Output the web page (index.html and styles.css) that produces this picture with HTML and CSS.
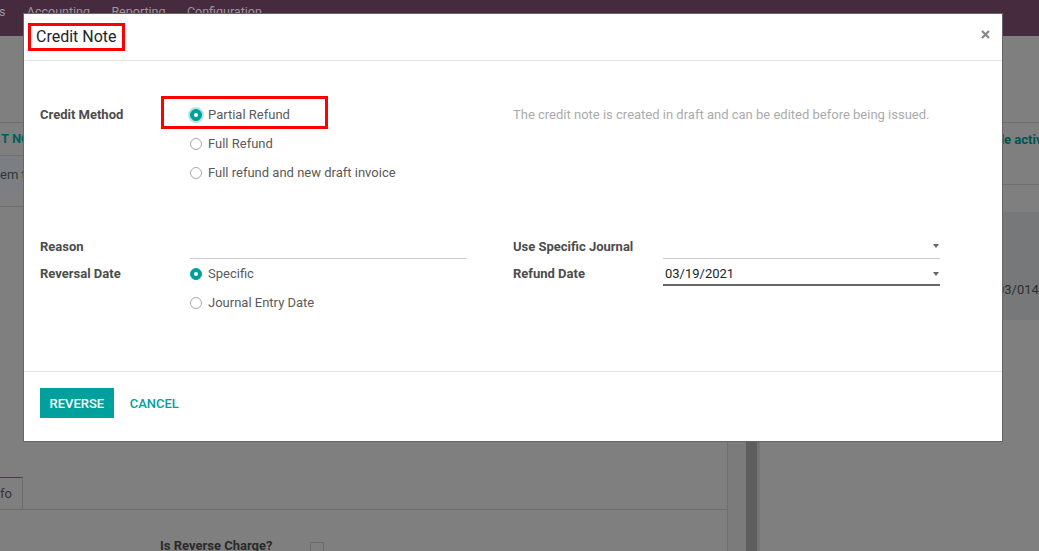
FILE: index.html
```html
<!DOCTYPE html>
<html lang="en">
<head>
<meta charset="utf-8">
<title>Credit Note</title>
<link rel="stylesheet" href="styles.css">
</head>
<body>
<div class="app">
  <header class="navbar">
    <span class="nav-item first">s</span>
    <span class="nav-item">Accounting</span>
    <span class="nav-item">Reporting</span>
    <span class="nav-item">Configuration</span>
  </header>
  <div class="control-panel"></div>
  <div class="workspace">
    <section class="sheet-area">
      <div class="statusbar"><span class="status-btn">T NOTE</span></div>
      <div class="alert-row"><span>em to</span></div>
      <div class="sheet-sep"></div>
      <div class="sheet-spacer"></div>
      <div class="tabs"><span class="tab">fo</span></div>
      <div class="field-row"><span class="field-label">Is Reverse Charge?</span><span class="checkbox"></span></div>
    </section>
    <div class="scroll-gap"></div>
    <div class="scroll-bar"></div>
    <aside class="chatter">
      <div class="chatter-top"><span class="chatter-btn">Schedule activity</span></div>
      <div class="message"><span class="message-date">03/014</span></div>
    </aside>
  </div>
</div>

<div class="modal">
  <div class="modal-header">
    <h4 class="modal-title"><span class="title-box">Credit Note</span></h4>
    <button class="close" aria-label="Close">
      <svg width="9" height="9" viewBox="0 0 9 9"><path d="M1 1 L8 8 M8 1 L1 8" stroke="#878787" stroke-width="2.2" stroke-linecap="butt"/></svg>
    </button>
  </div>
  <div class="modal-body">
    <div class="group group-top">
      <div class="label">Credit Method</div>
      <div class="radios">
        <div class="radio-item annotated">
          <span class="radio checked focus"></span><span class="radio-text">Partial Refund</span>
          <span class="annot-box"></span>
        </div>
        <div class="radio-item"><span class="radio"></span><span class="radio-text">Full Refund</span></div>
        <div class="radio-item"><span class="radio"></span><span class="radio-text">Full refund and new draft invoice</span></div>
      </div>
      <div class="help">The credit note is created in draft and can be edited before being issued.</div>
    </div>

    <div class="group group-bottom">
      <div class="left-half">
        <div class="label short">Reason</div>
        <div class="input-line"></div>
        <div class="label">Reversal Date</div>
        <div class="radios">
          <div class="radio-item"><span class="radio checked"></span><span class="radio-text">Specific</span></div>
          <div class="radio-item"><span class="radio"></span><span class="radio-text">Journal Entry Date</span></div>
        </div>
      </div>
      <div class="right-half">
        <div class="label short">Use Specific Journal</div>
        <div class="select-line"><span></span><span class="caret"></span></div>
        <div class="label">Refund Date</div>
        <div class="date-input"><span class="date-value">03/19/2021</span><span class="caret"></span></div>
      </div>
    </div>
  </div>
  <div class="modal-footer">
    <button class="btn-primary">REVERSE</button>
    <button class="btn-link">CANCEL</button>
  </div>
</div>
</body>
</html>
```

FILE: styles.css
```css
* { box-sizing: border-box; }

html, body {
  margin: 0;
  padding: 0;
}

body {
  width: 1039px;
  height: 551px;
  overflow: hidden;
  position: relative;
  background: #7f7f7f;
  font-family: Roboto, "Noto Sans", "Liberation Sans", sans-serif;
  font-size: 13px;
}

/* ---------- background application (already dimmed by backdrop) ---------- */
.app {
  height: 551px;
  display: flex;
  flex-direction: column;
}

.navbar {
  flex: none;
  height: 36px;
  background: #452b3d;
  display: flex;
}

.nav-item {
  color: #a2929d;
  font-size: 12.5px;
  line-height: 20px;
  padding: 2px 10.7px 0;
}

.nav-item.first { padding-left: 0; margin-left: -1px; }

.control-panel {
  flex: none;
  height: 87px;
  border-bottom: 1px solid #6e6e6e;
}

.workspace {
  flex: 1;
  display: flex;
}

.sheet-area {
  width: 728px;
  flex: none;
  border-right: 1px solid #6f6f6f;
  display: flex;
  flex-direction: column;
}

.statusbar {
  height: 33px;
  border-bottom: 1px solid #6e6e6e;
}

.status-btn {
  display: block;
  padding-left: 1px;
  line-height: 32px;
  font-weight: 700;
  color: #005f5d;
}

.alert-row {
  height: 37px;
  background: #7b7f83;
  color: #333;
  line-height: 37px;
}

.sheet-sep {
  height: 14px;
  border-bottom: 1px solid #6e6e6e;
}

.sheet-spacer { height: 270px; }

.tabs {
  height: 33px;
  border-bottom: 1px solid #6e6e6e;
  display: flex;
}

.tab {
  width: 23px;
  border-top: 1px solid #4f3a49;
  border-right: 1px solid #6a6a6a;
  line-height: 31px;
  color: #333;
  font-size: 13px;
}

.field-row {
  margin-top: 25px;
  display: flex;
  align-items: center;
  padding-left: 160px;
  height: 20px;
}

.field-label {
  font-weight: 700;
  color: #2a2a2a;
}

.checkbox {
  width: 14px;
  height: 14px;
  margin-left: 37px;
  margin-top: 8px;
  border: 1px solid #6a6a6a;
}

.scroll-gap {
  width: 18px;
  flex: none;
  background: #7b7b7b;
}

.scroll-bar {
  width: 14px;
  flex: none;
  background: #5e5e5e;
  border-right: 3px solid #747474;
}

.chatter {
  flex: 1;
  display: flex;
  flex-direction: column;
}

.chatter-top {
  height: 62px;
  border-bottom: 1px solid #6e6e6e;
  padding: 8px 0 0 197px;
}

.chatter-btn {
  font-weight: 700;
  color: #005452;
  line-height: 18px;
  white-space: nowrap;
}

.message {
  margin-top: 27px;
  height: 108px;
  background: #76787a;
  padding: 69px 0 0 237px;
}

.message-date {
  color: #2f2f2f;
  line-height: 18px;
  white-space: nowrap;
}

/* ---------- modal ---------- */
.modal {
  position: absolute;
  top: 13px;
  left: 23px;
  width: 980px;
  background: #fff;
  border: 1px solid #666;
}

.modal-header {
  height: 47px;
  border-bottom: 1px solid #e6e6e6;
  display: flex;
  align-items: center;
  padding: 0 12px 0 4px;
}

.modal-title {
  margin: 0;
  font-size: 16px;
  font-weight: 400;
  color: #212529;
}

.title-box {
  display: inline-block;
  border: 3px solid #f00;
  padding: 0 5px 0 5px;
  line-height: 22px;
}

.close {
  margin-left: auto;
  margin-bottom: 5px;
  border: 0;
  padding: 0;
  background: none;
  display: flex;
}

.modal-body {
  height: 310px;
  padding: 39px 16px 0;
}

.group {
  display: grid;
  grid-template-columns: 150px 277px 46px 150px 277px;
  align-items: start;
}

.label {
  font-weight: 700;
  color: #4c4c4c;
  line-height: 29px;
}

.label.short {
  line-height: 25px;
  padding-top: 1px;
}

.radios {
  display: flex;
  flex-direction: column;
}

.radio-item {
  height: 29px;
  display: flex;
  align-items: center;
  gap: 6px;
  color: #5a5a5a;
}

.annotated { position: relative; }

.annot-box {
  position: absolute;
  left: -29px;
  top: -4px;
  width: 167px;
  height: 33px;
  border: 3px solid #f00;
}

.radio {
  width: 12px;
  height: 12px;
  border-radius: 50%;
  border: 1px solid #a8a8a8;
  background: #fff;
  flex: none;
  position: relative;
}

.radio.checked {
  background: #00a09d;
  border-color: #00a09d;
}

.radio.checked::after {
  content: "";
  position: absolute;
  left: 3px;
  top: 3px;
  width: 4px;
  height: 4px;
  border-radius: 50%;
  background: #fff;
}

.radio.focus {
  box-shadow: 0 0 0 2px rgba(0, 160, 157, 0.28);
}

.help {
  grid-column: 4 / span 2;
  color: #ababab;
  line-height: 29px;
}

.group-bottom { margin-top: 46px; }

.left-half,
.right-half {
  display: grid;
  grid-template-columns: 150px 277px;
  align-items: start;
}

.left-half { grid-column: 1 / span 2; }
.right-half { grid-column: 4 / span 2; }

.input-line {
  height: 26px;
  border-bottom: 1px solid #cfcfcf;
}

.select-line {
  height: 26px;
  border-bottom: 1px solid #cfcfcf;
  display: flex;
  justify-content: space-between;
  align-items: center;
}

.caret {
  width: 0;
  height: 0;
  border-top: 4px solid #666;
  border-left: 3.5px solid transparent;
  border-right: 3.5px solid transparent;
  margin-right: 1px;
}

.date-input {
  height: 27px;
  border-bottom: 2px solid #666;
  padding: 4px 0 0 2px;
  display: flex;
  justify-content: space-between;
  align-items: center;
}

.date-value {
  color: #212529;
  line-height: 21px;
}

.modal-footer {
  border-top: 1px solid #e6e6e6;
  padding: 16px 16px 23px;
  display: flex;
  align-items: center;
}

.btn-primary {
  height: 30px;
  padding: 0 9.5px;
  border: 0;
  background: #00a09d;
  color: #fff;
  font-family: Roboto, "Noto Sans", sans-serif;
  font-size: 13px;
  font-weight: 500;
}

.btn-link {
  margin-left: 6px;
  height: 30px;
  padding: 0 10px;
  border: 0;
  background: none;
  color: #00a09d;
  font-family: Roboto, "Noto Sans", sans-serif;
  font-size: 13px;
  font-weight: 500;
}
```
